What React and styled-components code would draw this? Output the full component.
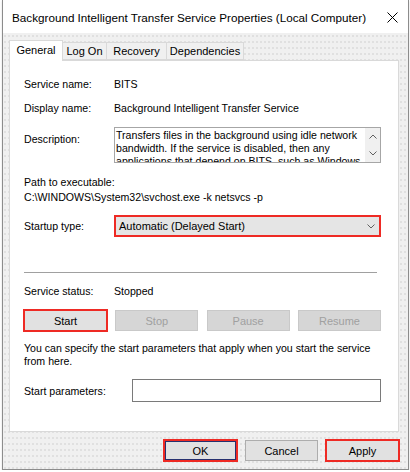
import React from "react";
import styled, { createGlobalStyle, css } from "styled-components";

const FONT = `"Liberation Sans", Arial, sans-serif`;
const RED = "#ee2a24";

const Global = createGlobalStyle`
  html, body { margin: 0; padding: 0; background: #ffffff; }
  body { font-family: ${FONT}; font-size: 10.6px; color: #000; }
  * { box-sizing: border-box; }
`;

const Window = styled.div`
  margin-left: 2px;
  width: 407px;
  height: 470px;
  border: 1px solid #8c8c8c;
  border-top: none;
  display: flex;
  flex-direction: column;
  background: #f0f0f0;
  box-shadow: 0 1px 2px rgba(0, 0, 0, 0.15);
`;

const TitleBar = styled.div`
  height: 33px;
  background: #ffffff;
  display: flex;
  align-items: center;
  justify-content: space-between;
  padding: 0 10px 0 9px;
`;

const Title = styled.div`
  font-size: 11.7px;
  color: #000;
  white-space: nowrap;
  margin-top: 1px;
`;

const CloseIcon = styled.svg`
  width: 11px;
  height: 11px;
  display: block;
  margin-top: 2px;
`;

const Body = styled.div`
  flex: 1;
  padding: 7px 9px 0 6px;
  display: flex;
  flex-direction: column;
  background-color: #f0f0f0;
  background-image: radial-gradient(#e0e0e0 0.7px, transparent 0.9px);
  background-size: 4px 6px;
`;

const TabRow = styled.div`
  display: flex;
  align-items: flex-end;
  height: 20px;
  position: relative;
  z-index: 1;
`;

const Tab = styled.div`
  width: ${(p) => p.$w}px;
  margin-left: ${(p) => (p.$first ? 0 : -1)}px;
  height: ${(p) => (p.$active ? 21 : 18)}px;
  margin-bottom: ${(p) => (p.$active ? -1 : 0)}px;
  border: 1px solid #d9d9d9;
  border-bottom: ${(p) => (p.$active ? "none" : "1px solid #d9d9d9")};
  background: ${(p) => (p.$active ? "#ffffff" : "#f0f0f0")};
  display: flex;
  align-items: center;
  justify-content: center;
  font-size: 11px;
  padding-bottom: ${(p) => (p.$active ? 2 : 0)}px;
  position: relative;
  z-index: ${(p) => (p.$active ? 2 : 1)};
`;

const Panel = styled.div`
  width: 390px;
  height: 372px;
  background: #ffffff;
  border: 1px solid #d9d9d9;
  padding: 0 17px 0 14px;
  display: flex;
  flex-direction: column;
`;

const Row = styled.div`
  display: flex;
  align-items: ${(p) => p.$align || "center"};
  margin-top: ${(p) => p.$mt || 0}px;
  min-height: 16px;
`;

const Label = styled.div`
  width: ${(p) => p.$w || 90}px;
  flex-shrink: 0;
  line-height: 16px;
  padding-top: ${(p) => p.$pt || 0}px;
  white-space: nowrap;
`;

const Value = styled.div`
  line-height: 16px;
  white-space: nowrap;
`;

const DescBox = styled.div`
  width: 267px;
  height: 36px;
  border: 1px solid #a6a6a6;
  display: flex;
  overflow: hidden;
`;

const DescText = styled.div`
  flex: 1;
  height: 34px;
  padding: 1px 0 0 1px;
  line-height: 13px;
  overflow: hidden;
  white-space: normal;
`;

const ScrollCol = styled.div`
  width: 15px;
  background: #f0f0f0;
  display: flex;
  flex-direction: column;
  align-items: center;
  justify-content: space-between;
  padding: 6px 0 6px;
`;

const Chevron = styled.svg`
  width: 8px;
  height: 5px;
  display: block;
`;

const TextLine = styled.div`
  line-height: 15px;
  height: 15px;
  white-space: nowrap;
  margin-top: ${(p) => p.$mt || 0}px;
`;

const Select = styled.div`
  margin-left: 1px;
  width: 265px;
  height: 20px;
  background: #e5e5e5;
  border: 1px solid ${RED};
  box-shadow: 0 0 0 1px ${RED};
  display: flex;
  align-items: center;
  justify-content: space-between;
  padding: 0 4px 0 3px;
  font-size: 11px;
`;

const Separator = styled.div`
  height: 1px;
  width: 353px;
  background: #a0a0a0;
  margin-top: ${(p) => p.$mt || 0}px;
`;

const ButtonRow = styled.div`
  display: flex;
  justify-content: space-between;
  margin-top: ${(p) => p.$mt || 0}px;
`;

const Button = styled.div`
  width: ${(p) => p.$w || 83}px;
  height: 21px;
  display: flex;
  align-items: center;
  justify-content: center;
  font-size: 11px;
  background: #e1e1e1;
  border: 1px solid #adadad;
  color: #000;
  ${(p) =>
    p.$disabled &&
    css`
      background: #d6d6d6;
      border-color: #c9c9c9;
      color: #a0a0a0;
    `}
  ${(p) =>
    p.$red &&
    css`
      border-color: ${RED};
      box-shadow: 0 0 0 1px ${RED};
    `}
  ${(p) =>
    p.$default &&
    css`
      box-shadow: 0 0 0 1px ${RED}, inset 0 0 0 1px #26306e;
    `}
`;

const HelpText = styled.div`
  margin-top: ${(p) => p.$mt || 0}px;
  line-height: 13px;
  width: 350px;
`;

const Input = styled.div`
  width: 249px;
  height: 23px;
  border: 1px solid #7a7a7a;
  background: #fff;
`;

const Footer = styled.div`
  display: flex;
  justify-content: flex-end;
  gap: 8px;
  margin-top: 8px;
`;

const chevronDown = (
  <Chevron viewBox="0 0 8 5">
    <path d="M0.5 0.5 L4 4 L7.5 0.5" fill="none" stroke="#606060" strokeWidth="1" />
  </Chevron>
);
const chevronUp = (
  <Chevron viewBox="0 0 8 5">
    <path d="M0.5 4.5 L4 1 L7.5 4.5" fill="none" stroke="#606060" strokeWidth="1" />
  </Chevron>
);

export default function App() {
  return (
    <>
      <Global />
      <Window>
        <TitleBar>
          <Title>Background Intelligent Transfer Service Properties (Local Computer)</Title>
          <CloseIcon viewBox="0 0 11 11">
            <path d="M0.5 0.5 L10.5 10.5 M10.5 0.5 L0.5 10.5" stroke="#000" strokeWidth="1" fill="none" />
          </CloseIcon>
        </TitleBar>
        <Body>
          <TabRow>
            <Tab $w={54} $first $active>General</Tab>
            <Tab $w={45}>Log On</Tab>
            <Tab $w={61}>Recovery</Tab>
            <Tab $w={78}>Dependencies</Tab>
          </TabRow>
          <Panel>
            <Row $mt={15}>
              <Label>Service name:</Label>
              <Value>BITS</Value>
            </Row>
            <Row $mt={8}>
              <Label>Display name:</Label>
              <Value>Background Intelligent Transfer Service</Value>
            </Row>
            <Row $mt={11} $align="flex-start">
              <Label $pt={4}>Description:</Label>
              <DescBox>
                <DescText>
                  Transfers files in the background using idle network bandwidth. If the service is
                  disabled, then any applications that depend on BITS, such as Windows Update or MSN
                  Explorer, will be unable to automatically download programs and other information.
                </DescText>
                <ScrollCol>
                  {chevronUp}
                  {chevronDown}
                </ScrollCol>
              </DescBox>
            </Row>
            <TextLine $mt={12}>Path to executable:</TextLine>
            <TextLine>C:\WINDOWS\System32\svchost.exe -k netsvcs -p</TextLine>
            <Row $mt={11}>
              <Label>Startup type:</Label>
              <Select>
                <span>Automatic (Delayed Start)</span>
                {chevronDown}
              </Select>
            </Row>
            <Separator $mt={36} />
            <Row $mt={10}>
              <Label>Service status:</Label>
              <Value>Stopped</Value>
            </Row>
            <ButtonRow $mt={11}>
              <Button $red>Start</Button>
              <Button $disabled>Stop</Button>
              <Button $disabled>Pause</Button>
              <Button $disabled>Resume</Button>
            </ButtonRow>
            <HelpText $mt={11}>
              You can specify the start parameters that apply when you start the service from here.
            </HelpText>
            <Row $mt={11}>
              <Label $w={108}>Start parameters:</Label>
              <Input />
            </Row>
          </Panel>
          <Footer>
            <Button $w={73} $red $default>OK</Button>
            <Button $w={73}>Cancel</Button>
            <Button $w={73} $red>Apply</Button>
          </Footer>
        </Body>
      </Window>
    </>
  );
}
